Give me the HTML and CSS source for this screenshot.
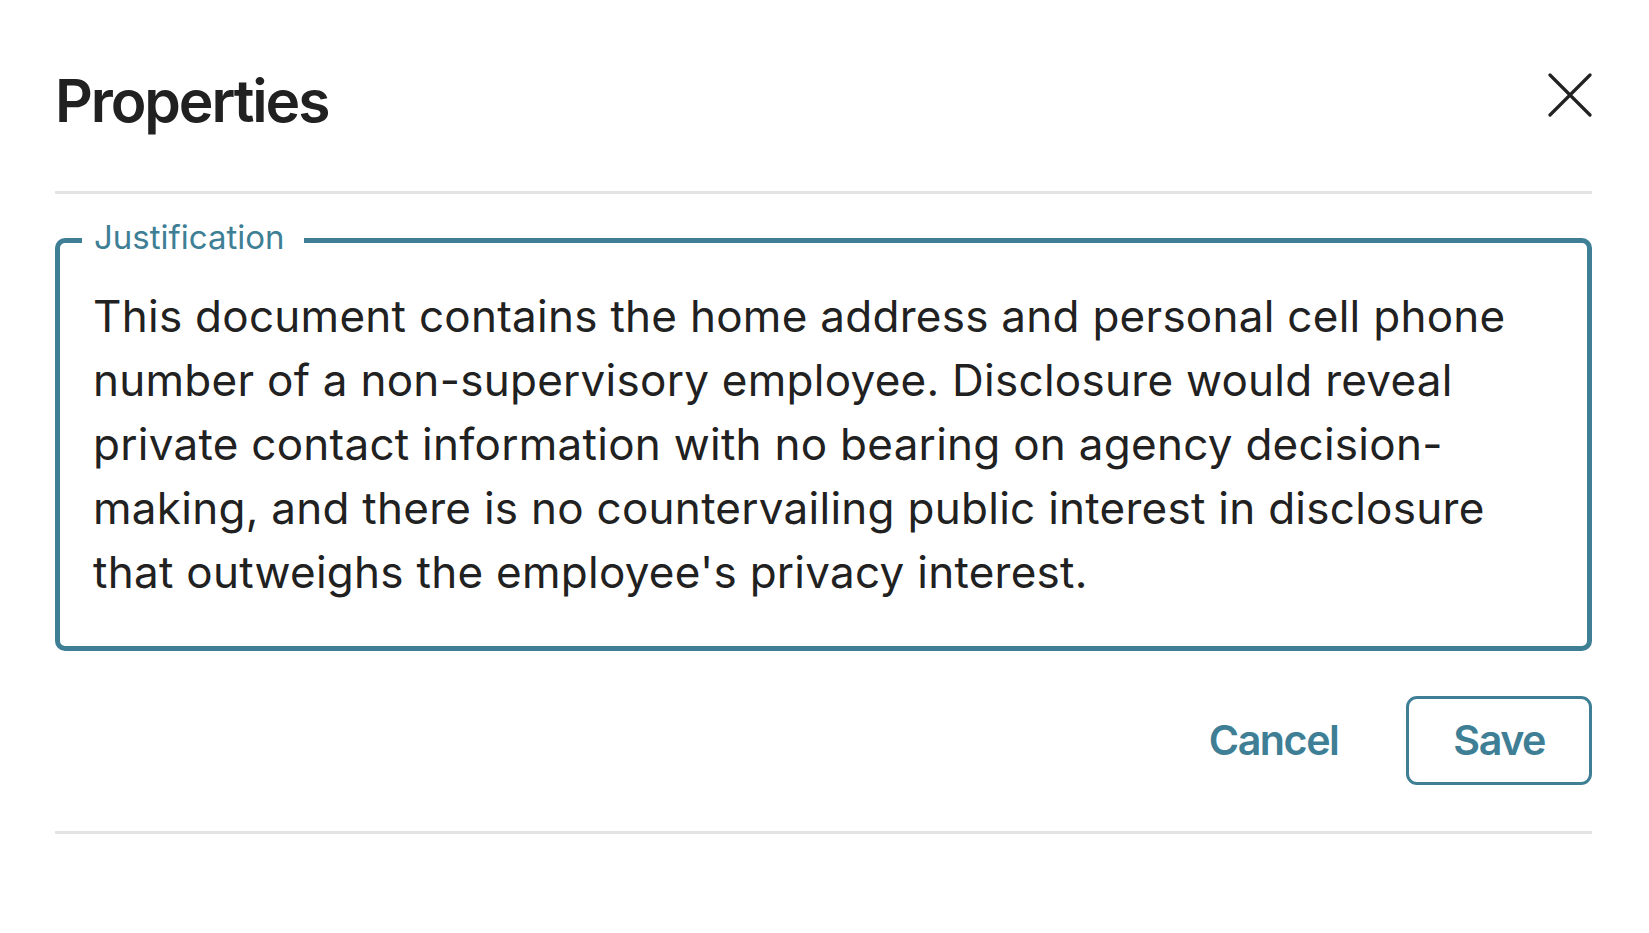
FILE: index.html
```html
<!DOCTYPE html>
<html lang="en">
<head>
<meta charset="utf-8">
<title>Properties</title>
<link rel="stylesheet" href="styles.css">
</head>
<body>
<div class="dialog">
  <header class="dialog-header">
    <h2 class="dialog-title">Properties</h2>
    <button class="close-btn" aria-label="Close">
      <svg width="44" height="44" viewBox="0 0 44 44" aria-hidden="true">
        <path d="M2 2 L42 42 M42 2 L2 42" fill="none" stroke="#222222" stroke-width="3.2" stroke-linecap="round"/>
      </svg>
    </button>
  </header>
  <hr class="divider divider-top">
  <fieldset class="field">
    <legend class="field-label">Justification</legend>
    <div class="field-text">This document contains the home address and personal cell phone number of a non-supervisory employee. Disclosure would reveal private contact information with no bearing on agency decision-making, and there is no countervailing public interest in disclosure that outweighs the employee's privacy interest.</div>
  </fieldset>
  <div class="actions">
    <button class="btn btn-text">Cancel</button>
    <button class="btn btn-outlined">Save</button>
  </div>
  <hr class="divider divider-bottom">
</div>
</body>
</html>
```
FILE: styles.css
```css
html, body {
  margin: 0;
  padding: 0;
  background: #ffffff;
}

body {
  font-family: Inter, "Noto Sans", "Liberation Sans", sans-serif;
  color: #212121;
}

.dialog {
  padding: 0 57px 0 55px;
}

.dialog-header {
  display: flex;
  justify-content: space-between;
  align-items: flex-start;
  padding-top: 65px;
}

.dialog-title {
  margin: 0;
  font-size: 58.7px;
  font-weight: 600;
  line-height: 71px;
  letter-spacing: -2.1px;
  color: #212121;
}

.close-btn {
  margin-top: 8px;
  padding: 0;
  border: 0;
  background: none;
  width: 44px;
  height: 44px;
  display: block;
  cursor: pointer;
}

.close-btn svg {
  display: block;
}

.divider {
  margin: 0;
  border: 0;
  height: 3px;
  background: #e3e3e3;
}

.divider-top {
  margin-top: 55px;
}

.field {
  margin: 23px 0 0 0;
  padding: 20px 35px 42px 33px;
  border: 5px solid #3f7f96;
  border-radius: 10px;
  min-width: 0;
}

.field-label {
  margin-left: -11px;
  padding: 0 19px 7px 12px;
  font-size: 33px;
  line-height: normal;
  font-weight: 400;
  color: #3f7f96;
}

.field-text {
  font-size: 44px;
  line-height: 64px;
  letter-spacing: 0.27px;
  color: #212121;
}

.actions {
  display: flex;
  justify-content: flex-end;
  align-items: center;
  gap: 20px;
  margin-top: 45px;
}

.btn {
  font-family: Inter, "Noto Sans", "Liberation Sans", sans-serif;
  font-size: 41.25px;
  font-weight: 600;
  letter-spacing: -1.5px;
  color: #3f7f96;
  background: none;
  cursor: pointer;
  height: 89px;
  line-height: 1;
}

.btn-text {
  border: 0;
  padding: 0 48px;
}

.btn-outlined {
  border: 3px solid #3f7f96;
  border-radius: 11px;
  padding: 0 44px;
}

.divider-bottom {
  margin-top: 46px;
}
```
